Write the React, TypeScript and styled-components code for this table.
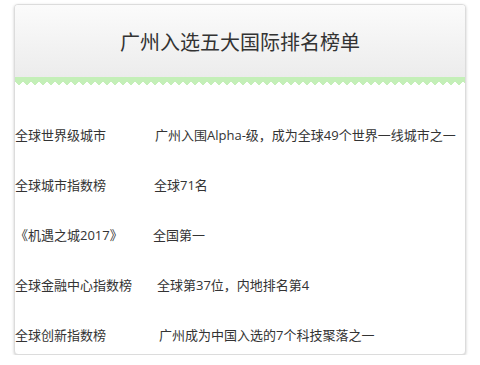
import * as React from 'react'
import styled, { createGlobalStyle } from 'styled-components';

const GlobalStyle = createGlobalStyle`
    html, body {
        margin: 0;
        padding: 0;
        background: #fff;
    }
    body {
        font-family: "Open Sans", "Noto Sans CJK SC", "Microsoft YaHei", sans-serif;
        color: #333;
    }
`;

const Card = styled.div`
    width: 450px;
    margin: 4px 0 0 14px;
    border: 1px solid #dcdcdc;
    border-radius: 4px;
    box-shadow: 0 1px 3px rgba(0, 0, 0, 0.22);
    overflow: hidden;
    background: #fff;
`;

const Header = styled.div`
    height: 72px;
    display: flex;
    align-items: center;
    justify-content: center;
    background: linear-gradient(to bottom, #fbfbfb, #ececec);
`;

const Title = styled.h2`
    margin: 0;
    font-size: 20px;
    font-weight: normal;
    color: #333;
`;

// green strip with a zig-zag lower edge
const Zigzag = styled.div`
    height: 8px;
    background:
        conic-gradient(from -45deg at 50% 100%, #c4efb8 90deg, transparent 0) bottom left / 8px 4px repeat-x,
        linear-gradient(#c4efb8, #c4efb8) top left / 100% 4px no-repeat;
`;

const List = styled.div`
    padding: 38px 0 7px 0;
    display: flex;
    flex-direction: column;
    gap: 26px;
`;

const Row = styled.div`
    display: grid;
    grid-template-columns: 138px 1fr;
    line-height: 24px;
    font-size: 13px;
`;

const Name = styled.span`
    white-space: nowrap;
`;

const Value = styled.span<{ $indent: number }>`
    padding-left: ${p => p.$indent}px;
    white-space: nowrap;
`;

interface Ranking {
    name: string;
    value: string;
    indent: number;
}

const rankings: Ranking[] = [
    { name: '全球世界级城市', value: '广州入围Alpha-级，成为全球49个世界一线城市之一', indent: 2 },
    { name: '全球城市指数榜', value: '全球71名', indent: 1 },
    { name: '《机遇之城2017》', value: '全国第一', indent: 0 },
    { name: '全球金融中心指数榜', value: '全球第37位，内地排名第4', indent: 4 },
    { name: '全球创新指数榜', value: '广州成为中国入选的7个科技聚落之一', indent: 6 },
];

export default function App() {
    return (
        <>
            <GlobalStyle />
            <Card>
                <Header>
                    <Title>广州入选五大国际排名榜单</Title>
                </Header>
                <Zigzag />
                <List>
                    {rankings.map(item => (
                        <Row key={item.name}>
                            <Name>{item.name}</Name>
                            <Value $indent={item.indent}>{item.value}</Value>
                        </Row>
                    ))}
                </List>
            </Card>
        </>
    );
}
